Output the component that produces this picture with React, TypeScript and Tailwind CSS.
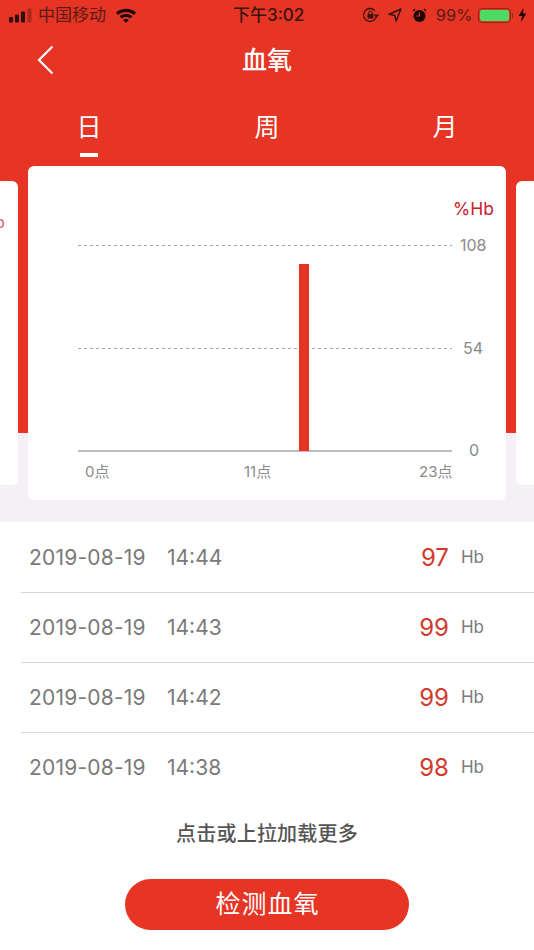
import React from "react";

const FONT = "font-['Inter','Noto_Sans_CJK_SC',sans-serif]";

function StatusBar() {
  return (
    <div className="flex h-[30px] items-center justify-between pl-[9px] pr-[7px] text-[#3a1410]">
      <div className="flex items-center">
        <svg width="24" height="15" viewBox="0 0 24 15" className="mr-[5px]">
          <rect x="0" y="9" width="4" height="5.500" rx="1" fill="#2b0f0c" />
          <rect x="6" y="6.500" width="4" height="8" rx="1" fill="#2b0f0c" />
          <rect x="12" y="3.500" width="4" height="11" rx="1" fill="#2b0f0c" />
          <rect x="18.500" y="0.500" width="4" height="14" rx="1" fill="#a8281c" />
        </svg>
        <span className="text-[17px] leading-none text-[#5a1c14]">中国移动</span>
        <svg width="22" height="16" viewBox="0 0 22 16" className="ml-[9px]">
          <path d="M1 5.600C6.600 .6 15.400 .6 21 5.600L19 7.900C14.600 4 7.400 4 3 7.900Z" fill="#1c0907" />
          <path d="M4.600 9.300C8.200 6.200 13.800 6.200 17.400 9.300L15.400 11.500C13 9.500 9 9.500 6.600 11.500Z" fill="#1c0907" />
          <path d="M8.100 13C9.800 11.800 12.200 11.800 13.900 13L11 15.800Z" fill="#1c0907" />
        </svg>
      </div>
      <span className="absolute left-[233px] text-[17px] font-medium leading-none text-[#3a1410]">下午3:02</span>
      <div className="flex items-center">
        <svg width="18" height="16" viewBox="0 0 18 16" className="mr-[8px]">
          <path d="M14.500 8A6.500 6.500 0 1 1 12.800 3.600" fill="none" stroke="#3a1410" strokeWidth="1.300" />
          <path d="M11.500 7.500L17.500 7.500L14.500 10.800Z" fill="#3a1410" />
          <rect x="5.500" y="7" width="6" height="4.500" rx="0.700" fill="#3a1410" />
          <path d="M6.800 7V5.800A1.700 1.700 0 0 1 10.200 5.800V7" fill="none" stroke="#3a1410" strokeWidth="1" />
        </svg>
        <svg width="14" height="14" viewBox="0 0 14 14" className="mr-[9.500px]">
          <path d="M13 1L8 13L6.800 7.400L1 6.200Z" fill="none" stroke="#3a1410" strokeWidth="1.500" strokeLinejoin="round" />
        </svg>
        <svg width="15" height="15" viewBox="0 0 15 15" className="mr-[9px]">
          <circle cx="7.500" cy="8" r="6" fill="#1c0907" />
          <path d="M7.500 4.500V8H4.500" fill="none" stroke="#e63425" strokeWidth="1.200" />
          <path d="M1 3L3 1M14 3L12 1" stroke="#1c0907" strokeWidth="1.300" />
        </svg>
        <span className="mr-[5px] text-[16.500px] leading-none text-[#5a1c14]">99%</span>
        <div className="flex items-center">
          <div className="flex h-[15px] w-[33px] rounded-[4px] border-[1.500px] border-[#8c2a18] p-[1px]">
            <div className="w-full rounded-[2px] bg-[#4cd964]" />
          </div>
          <div className="ml-[1px] h-[5px] w-[1.500px] bg-[#8c2a18]" />
        </div>
        <svg width="9" height="14" viewBox="0 0 9 14" className="ml-[5px]">
          <path d="M5.500 0L0.500 8H4L3 14L8.500 5.500H5Z" fill="#1c0907" />
        </svg>
      </div>
    </div>
  );
}

function Chart() {
  return (
    <div className="relative h-[334px] w-[478px] shrink-0 rounded-[6px] bg-white">
      <span className="absolute left-[425px] top-[32px] text-[17.500px] leading-[22px] text-[#c8202f]">%Hb</span>
      <svg width="478" height="334" viewBox="0 0 478 334" className="absolute left-0 top-0">
        <line x1="50" x2="424" y1="79.500" y2="79.500" stroke="#a8a8a8" strokeDasharray="3 3" />
        <line x1="50" x2="424" y1="182.500" y2="182.500" stroke="#a8a8a8" strokeDasharray="3 3" />
        <line x1="50" x2="424" y1="285" y2="285" stroke="#a9a9a9" strokeWidth="1.500" />
        <rect x="271" y="98" width="10" height="187" fill="#e63425" />
      </svg>
      <span className="absolute left-[432px] top-[69px] text-[16px] leading-[20px] text-[#8a8a8a]">108</span>
      <span className="absolute left-[435px] top-[172px] text-[16px] leading-[20px] text-[#8a8a8a]">54</span>
      <span className="absolute left-[441px] top-[274px] text-[16px] leading-[20px] text-[#8a8a8a]">0</span>
      <span className="absolute left-[57px] top-[296px] text-[15px] leading-[20px] text-[#8a8a8a]">0点</span>
      <span className="absolute left-[216px] top-[296px] text-[15px] leading-[20px] text-[#8a8a8a]">11点</span>
      <span className="absolute left-[391px] top-[296px] text-[15px] leading-[20px] text-[#8a8a8a]">23点</span>
    </div>
  );
}

const rows = [
  ["14:44", "97"],
  ["14:43", "99"],
  ["14:42", "99"],
  ["14:38", "98"],
];

export default function App() {
  return (
    <div className={`h-[950px] w-[534px] overflow-hidden bg-white ${FONT}`}>
      <div className="bg-[#e63425]">
        <StatusBar />
        <div className="relative flex h-[60px] items-center justify-center">
          <svg width="18" height="30" viewBox="0 0 18 30" className="absolute left-[37px] top-[15px]">
            <path d="M15.500 1.500L2 15L15.500 28.500" fill="none" stroke="#fff" strokeWidth="2.200" />
          </svg>
          <span className="text-[25px] font-medium leading-none text-white">血氧</span>
        </div>
        <div className="relative h-[76px]">
          <div className="grid h-full grid-cols-[178px_178px_178px] text-[25px] leading-none text-white">
            <div className="flex flex-col items-center pt-[25px]">
              <span>日</span>
              <div className="mt-[13px] h-[4px] w-[18px] bg-white" />
            </div>
            <div className="flex justify-center pt-[25px]"><span>周</span></div>
            <div className="flex justify-center pt-[25px]"><span>月</span></div>
          </div>
        </div>
      </div>
      <div className="flex h-[356px] items-start justify-between bg-[linear-gradient(#e63425_0,#e63425_267px,#f4f0f6_267px)]">
        <div className="relative mt-[15px] h-[304px] w-[18px] overflow-hidden rounded-r-[6px] bg-white">
          <span className="absolute -left-[5px] top-[30px] text-[16px] leading-[22px] text-[#d0606a]">b</span>
        </div>
        <Chart />
        <div className="mt-[15px] h-[304px] w-[18px] rounded-l-[6px] bg-white" />
      </div>
      <div className="pl-[21px] pt-[1px]">
        {rows.map(([t, v], i) => (
          <div key={t} className={`flex h-[70px] items-center pl-[8px] pr-[50px] ${i < 3 ? "border-b border-[#d6d6d6]" : ""}`}>
            <span className="w-[138px] text-[21px] tracking-[0.2px] text-[#7a7a7a]">2019-08-19</span>
            <span className="text-[21px] text-[#7a7a7a]">{t}</span>
            <span className="ml-auto text-[24px] text-[#d23a2c]">{v}</span>
            <span className="ml-[12px] text-[17px] text-[#7a7a7a]">Hb</span>
          </div>
        ))}
      </div>
      <div className="flex flex-col items-center">
        <div className="mt-[19px] text-[20px] font-medium leading-[24px] tracking-[0.2px] text-[#555]">点击或上拉加载更多</div>
        <button className="mt-[33px] flex h-[51px] w-[284px] items-center justify-center rounded-full bg-[#e63425] pl-[1px] text-[25px] tracking-[1px] text-white">
          检测血氧
        </button>
      </div>
    </div>
  );
}
